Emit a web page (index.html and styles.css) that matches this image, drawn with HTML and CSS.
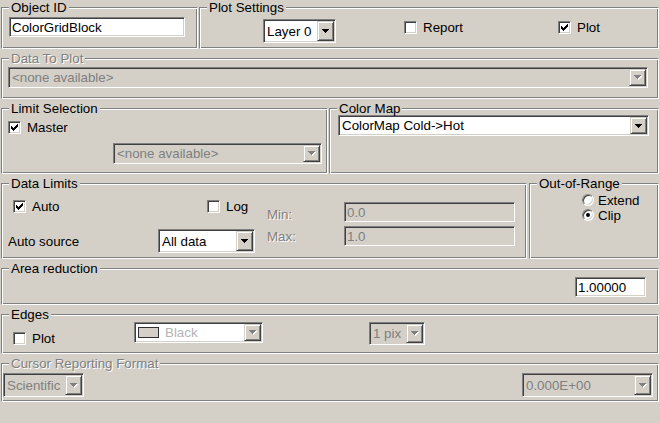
FILE: index.html
```html
<!DOCTYPE html>
<html>
<head>
<meta charset="utf-8">
<title>ColorGridBlock</title>
<link rel="stylesheet" href="styles.css">
</head>
<body>
<div class="dialog">
  <div class="row">
    <fieldset class="grp g-objid">
      <legend>Object ID</legend>
      <div class="objid-body">
        <div class="edit objid-edit">ColorGridBlock</div>
      </div>
    </fieldset>
    <fieldset class="grp g-plotset">
      <legend>Plot Settings</legend>
      <div class="plotset-body">
        <div class="combo layer-combo">
          <span class="combo-text">Layer 0</span>
          <span class="combo-btn"><svg class="arrow" width="7" height="4" viewBox="0 0 7 4"><path d="M0 0h7v1H0zM1 1h5v1H1zM2 2h3v1H2zM3 3h1v1H3z"/></svg></span>
        </div>
        <div class="check report-check"><span class="box"></span><span class="check-label">Report</span></div>
        <div class="check plot-check"><span class="box"><svg class="tick" width="7" height="7" viewBox="0 0 7 7"><path d="M6 0h1v1H6zM5 1h2v1H5zM0 2h1v1H0zM4 2h3v1H4zM0 3h2v1H0zM3 3h3v1H3zM0 4h5v1H0zM1 5h3v1H1zM2 6h1v1H2z"/></svg></span><span class="check-label">Plot</span></div>
      </div>
    </fieldset>
  </div>

  <fieldset class="grp g-dtp">
    <legend class="dis">Data To Plot</legend>
    <div class="dtp-body">
      <div class="combo off dtp-combo">
        <span class="combo-text">&lt;none available&gt;</span>
        <span class="combo-btn"><svg class="arrow" width="8" height="5" viewBox="0 0 8 5"><path fill="#fff" d="M1 1h7v1H1zM2 2h5v1H2zM3 3h3v1H3zM4 4h1v1H4z"/><path fill="#808080" d="M0 0h7v1H0zM1 1h5v1H1zM2 2h3v1H2zM3 3h1v1H3z"/></svg></span>
      </div>
    </div>
  </fieldset>

  <div class="row">
    <fieldset class="grp g-limit">
      <legend>Limit Selection</legend>
      <div class="limit-body">
        <div class="check"><span class="box"><svg class="tick" width="7" height="7" viewBox="0 0 7 7"><path d="M6 0h1v1H6zM5 1h2v1H5zM0 2h1v1H0zM4 2h3v1H4zM0 3h2v1H0zM3 3h3v1H3zM0 4h5v1H0zM1 5h3v1H1zM2 6h1v1H2z"/></svg></span><span class="check-label">Master</span></div>
        <div class="combo off limit-combo">
          <span class="combo-text">&lt;none available&gt;</span>
          <span class="combo-btn"><svg class="arrow" width="8" height="5" viewBox="0 0 8 5"><path fill="#fff" d="M1 1h7v1H1zM2 2h5v1H2zM3 3h3v1H3zM4 4h1v1H4z"/><path fill="#808080" d="M0 0h7v1H0zM1 1h5v1H1zM2 2h3v1H2zM3 3h1v1H3z"/></svg></span>
        </div>
      </div>
    </fieldset>
    <fieldset class="grp g-cmap">
      <legend>Color Map</legend>
      <div class="cmap-body">
        <div class="combo cmap-combo">
          <span class="combo-text">ColorMap Cold-&gt;Hot</span>
          <span class="combo-btn"><svg class="arrow" width="7" height="4" viewBox="0 0 7 4"><path d="M0 0h7v1H0zM1 1h5v1H1zM2 2h3v1H2zM3 3h1v1H3z"/></svg></span>
        </div>
      </div>
    </fieldset>
  </div>

  <div class="row">
    <fieldset class="grp g-dlim">
      <legend>Data Limits</legend>
      <div class="dlim-body">
        <div class="dlim-left">
          <div class="dlim-checks">
            <div class="check auto-check"><span class="box"><svg class="tick" width="7" height="7" viewBox="0 0 7 7"><path d="M6 0h1v1H6zM5 1h2v1H5zM0 2h1v1H0zM4 2h3v1H4zM0 3h2v1H0zM3 3h3v1H3zM0 4h5v1H0zM1 5h3v1H1zM2 6h1v1H2z"/></svg></span><span class="check-label">Auto</span></div>
            <div class="check"><span class="box"></span><span class="check-label">Log</span></div>
          </div>
          <div class="autosrc">
            <span class="autosrc-label">Auto source</span>
            <div class="combo alldata-combo">
              <span class="combo-text">All data</span>
              <span class="combo-btn"><svg class="arrow" width="7" height="4" viewBox="0 0 7 4"><path d="M0 0h7v1H0zM1 1h5v1H1zM2 2h3v1H2zM3 3h1v1H3z"/></svg></span>
            </div>
          </div>
        </div>
        <div class="dlim-right">
          <div class="mm-row">
            <span class="dis mm-label min-label">Min:</span>
            <div class="edit off mm-edit">0.0</div>
          </div>
          <div class="mm-row max-row">
            <span class="dis mm-label max-label">Max:</span>
            <div class="edit off mm-edit">1.0</div>
          </div>
        </div>
      </div>
    </fieldset>
    <fieldset class="grp g-oor">
      <legend>Out-of-Range</legend>
      <div class="oor-body">
        <div class="radio-row"><span class="radio"></span><span class="radio-label">Extend</span></div>
        <div class="radio-row"><span class="radio on"></span><span class="radio-label">Clip</span></div>
      </div>
    </fieldset>
  </div>

  <fieldset class="grp g-area">
    <legend>Area reduction</legend>
    <div class="area-body">
      <div class="edit area-edit">1.00000</div>
    </div>
  </fieldset>

  <fieldset class="grp g-edges">
    <legend>Edges</legend>
    <div class="edges-body">
      <div class="check edges-check"><span class="box"></span><span class="check-label">Plot</span></div>
      <div class="combo offwhite black-combo">
        <span class="combo-text"><span class="swatch"></span><span class="swatch-name">Black</span></span>
        <span class="combo-btn"><svg class="arrow" width="8" height="5" viewBox="0 0 8 5"><path fill="#fff" d="M1 1h7v1H1zM2 2h5v1H2zM3 3h3v1H3zM4 4h1v1H4z"/><path fill="#808080" d="M0 0h7v1H0zM1 1h5v1H1zM2 2h3v1H2zM3 3h1v1H3z"/></svg></span>
      </div>
      <div class="combo off pix-combo">
        <span class="combo-text">1 pix</span>
        <span class="combo-btn"><svg class="arrow" width="8" height="5" viewBox="0 0 8 5"><path fill="#fff" d="M1 1h7v1H1zM2 2h5v1H2zM3 3h3v1H3zM4 4h1v1H4z"/><path fill="#808080" d="M0 0h7v1H0zM1 1h5v1H1zM2 2h3v1H2zM3 3h1v1H3z"/></svg></span>
      </div>
    </div>
  </fieldset>

  <fieldset class="grp g-cursor">
    <legend class="dis">Cursor Reporting Format</legend>
    <div class="cursor-body">
      <div class="combo off sci-combo">
        <span class="combo-text">Scientific</span>
        <span class="combo-btn"><svg class="arrow" width="8" height="5" viewBox="0 0 8 5"><path fill="#fff" d="M1 1h7v1H1zM2 2h5v1H2zM3 3h3v1H3zM4 4h1v1H4z"/><path fill="#808080" d="M0 0h7v1H0zM1 1h5v1H1zM2 2h3v1H2zM3 3h1v1H3z"/></svg></span>
      </div>
      <div class="combo off fmt-combo">
        <span class="combo-text">0.000E+00</span>
        <span class="combo-btn"><svg class="arrow" width="8" height="5" viewBox="0 0 8 5"><path fill="#fff" d="M1 1h7v1H1zM2 2h5v1H2zM3 3h3v1H3zM4 4h1v1H4z"/><path fill="#808080" d="M0 0h7v1H0zM1 1h5v1H1zM2 2h3v1H2zM3 3h1v1H3z"/></svg></span>
      </div>
    </div>
  </fieldset>
</div>
</body>
</html>
```

FILE: styles.css
```css
* { box-sizing: border-box; }
html, body { margin: 0; padding: 0; }
body {
  width: 660px;
  height: 423px;
  overflow: hidden;
  background: #d4d0c8;
  font-family: "Liberation Sans", Arial, sans-serif;
  font-size: 13.33px;
  color: #000;
}
.dialog {
  display: flex;
  flex-direction: column;
  gap: 2px;
  margin-left: 1px;
  width: 658px;
}
.row { display: flex; }

/* etched group box */
.grp {
  margin: 0;
  padding: 0;
  min-width: 0;
  border: 1px solid;
  border-color: #808080 #fff #fff #808080;
  box-shadow: inset 1px 1px #fff, inset -1px -1px #808080;
}
.grp > legend {
  margin-left: 7px;
  padding: 0 2px;
  height: 15px;
  line-height: 15px;
  background: #d4d0c8;
  white-space: nowrap;
}
.dis { color: #808080; text-shadow: 1px 1px 0 #fff; }

.g-objid { width: 197px; height: 49px; }
.g-plotset { width: 460px; height: 49px; margin-left: 1px; }
.g-dtp { height: 48px; }
.g-limit { width: 327px; height: 73px; }
.g-cmap { width: 330px; height: 73px; margin-left: 1px; }
.g-dlim { width: 526px; height: 83px; }
.g-oor { width: 130px; height: 83px; margin-left: 2px; }
.g-area { height: 44px; }
.g-edges { height: 47px; }
.g-cursor { height: 46px; }

/* sunken edit */
.edit {
  height: 20px;
  border: 1px solid;
  border-color: #808080 #fff #fff #808080;
  box-shadow: inset 1px 1px #404040, inset -1px -1px #d4d0c8;
  background: #fff;
  padding: 0 2px;
  display: flex;
  align-items: center;
  white-space: nowrap;
}
.edit.off { background: #d4d0c8; color: #808080; }

/* combo box */
.combo {
  display: flex;
  border: 1px solid;
  border-color: #808080 #fff #fff #808080;
  box-shadow: inset 1px 1px #404040, inset -1px -1px #d4d0c8;
  background: #fff;
  padding: 1px;
  height: 21px;
}
.combo.off { background: #d4d0c8; color: #808080; }
.combo.offwhite { color: #b4b4b4; }
.combo-text {
  flex: 1;
  display: flex;
  align-items: center;
  padding-left: 2px;
  white-space: nowrap;
  overflow: hidden;
}
.combo-btn {
  flex: none;
  width: 17px;
  display: flex;
  align-items: center;
  justify-content: center;
  background: #d4d0c8;
  border: 1px solid;
  border-color: #d4d0c8 #404040 #404040 #d4d0c8;
  box-shadow: inset 1px 1px #fff, inset -1px -1px #808080;
}
.arrow { display: block; shape-rendering: crispEdges; }
.tick { display: block; shape-rendering: crispEdges; }

/* checkbox */
.check { display: flex; align-items: center; height: 13px; }
.box {
  flex: none;
  width: 13px;
  height: 13px;
  border: 1px solid;
  border-color: #808080 #fff #fff #808080;
  box-shadow: inset 1px 1px #404040, inset -1px -1px #d4d0c8;
  background: #fff;
  display: flex;
  align-items: center;
  justify-content: center;
}
.check-label { margin-left: 6px; line-height: 15px; white-space: nowrap; }

/* radio */
.radio-row { display: flex; align-items: center; height: 12px; margin-bottom: 3px; }
.radio {
  flex: none;
  width: 12px;
  height: 12px;
  border-radius: 50%;
  border: 1px solid;
  border-color: #808080 #fff #fff #808080;
  box-shadow: inset 1px 1px #404040, inset -1px -1px #d4d0c8;
  background: #fff;
  display: flex;
  align-items: center;
  justify-content: center;
}
.radio.on::after {
  content: "";
  width: 4px;
  height: 4px;
  border-radius: 50%;
  background: #000;
}
.radio-label { margin-left: 4px; line-height: 15px; }

/* Object ID */
.objid-body { padding: 2px 0 0 7px; }
.objid-edit { width: 176px; }

/* Plot settings */
.plotset-body { display: flex; align-items: flex-start; padding-left: 63px; }
.layer-combo { width: 73px; height: 24px; margin-top: 4px; }
.report-check { margin-top: 6px; margin-left: 68px; width: 154px; }
.plot-check { margin-top: 6px; }

/* Data to plot */
.dtp-body { padding: 1px 0 0 6px; }
.dtp-combo { width: 640px; }

/* Limit selection */
.limit-body { padding: 5px 0 0 6px; }
.limit-combo { width: 209px; margin: 9px 0 0 105px; }

/* Color map */
.cmap-body { margin-top: -1px; padding-left: 8px; }
.cmap-combo { width: 311px; }

/* Data limits */
.dlim-body { display: flex; }
.dlim-left { width: 258px; flex: none; }
.dlim-checks { display: flex; margin-top: 9px; padding-left: 11px; }
.auto-check { width: 194px; }
.autosrc { display: flex; align-items: center; margin-top: 16px; padding-left: 6px; }
.autosrc-label { width: 150px; flex: none; }
.alldata-combo { width: 97px; height: 24px; }
.dlim-right { padding: 11px 0 0 7px; }
.mm-row { display: flex; align-items: flex-start; }
.max-row { margin-top: 4px; }
.mm-label { width: 77px; flex: none; line-height: 15px; }
.min-label { margin-top: 5px; }
.max-label { margin-top: 3px; }
.mm-edit { width: 171px; }

/* Out of range */
.oor-body { padding: 3px 0 0 52px; }

/* Area reduction */
.area-body { display: flex; justify-content: flex-end; padding: 1px 12px 0 0; }
.area-edit { width: 71px; }

/* Edges */
.edges-body { display: flex; align-items: flex-start; padding-left: 11px; }
.edges-check { width: 121px; margin-top: 10px; }
.black-combo { width: 129px; }
.swatch {
  flex: none;
  width: 21px;
  height: 11px;
  border: 1px solid #303030;
  background: #d4d0c8;
}
.swatch-name { margin-left: 6px; }
.pix-combo { width: 56px; height: 23px; margin-left: 106px; }

/* Cursor format */
.cursor-body { display: flex; padding: 2px 5px 0 1px; }
.sci-combo { width: 81px; height: 24px; }
.fmt-combo { width: 131px; height: 24px; margin-left: auto; }
```
